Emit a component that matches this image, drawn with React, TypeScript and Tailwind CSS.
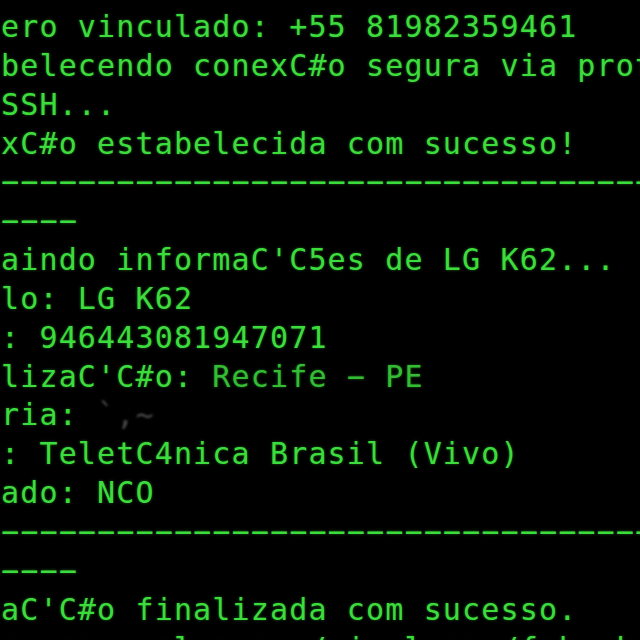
import React from "react";

const green = "text-[#3ddc3d]";

function Line({ children }: { children?: React.ReactNode }) {
  return <div className="h-[38.85px] whitespace-pre">{children}</div>;
}

export default function App() {
  // terminal draws its hyphens wide, the minus sign matches them better
  const dashes = "\u2212".repeat(40);

  return (
    <div className="h-[640px] w-[640px] overflow-hidden bg-black">
      <div
        className={`pt-[8px] pl-[1px] font-['DejaVu_Sans_Mono',monospace] text-[30px] leading-[38.85px] tracking-[1.15px] ${green} [text-shadow:0_0_3px_rgba(61,220,61,0.45)]`}
      >
        <Line>ero vinculado: +55 81982359461</Line>
        <Line>belecendo conexC#o segura via protocolo</Line>
        <Line>SSH...</Line>
        <Line>xC#o estabelecida com sucesso!</Line>
        <Line>{dashes}</Line>
        <Line>{"\u2212\u2212\u2212\u2212"}</Line>
        <Line>aindo informaC'C5es de LG K62...</Line>
        <Line>lo: LG K62</Line>
        <Line>: 946443081947071</Line>
        <Line>
          lizaC'C#o: <span className="text-[#34bd34]">Recife {"\u2212"} PE</span>
        </Line>
        <Line>
          ria:{" "}
          <span className="text-[#4a4a4a] blur-[1.2px] [text-shadow:none]">
            `,~
          </span>
        </Line>
        <Line>: TeletC4nica Brasil (Vivo)</Line>
        <Line>ado: NCO</Line>
        <Line>{dashes}</Line>
        <Line>{"\u2212\u2212\u2212\u2212"}</Line>
        <Line>aC'C#o finalizada com sucesso.</Line>
        <Line>ressao salva em /simulacao/fake_kit.log</Line>
      </div>
    </div>
  );
}
